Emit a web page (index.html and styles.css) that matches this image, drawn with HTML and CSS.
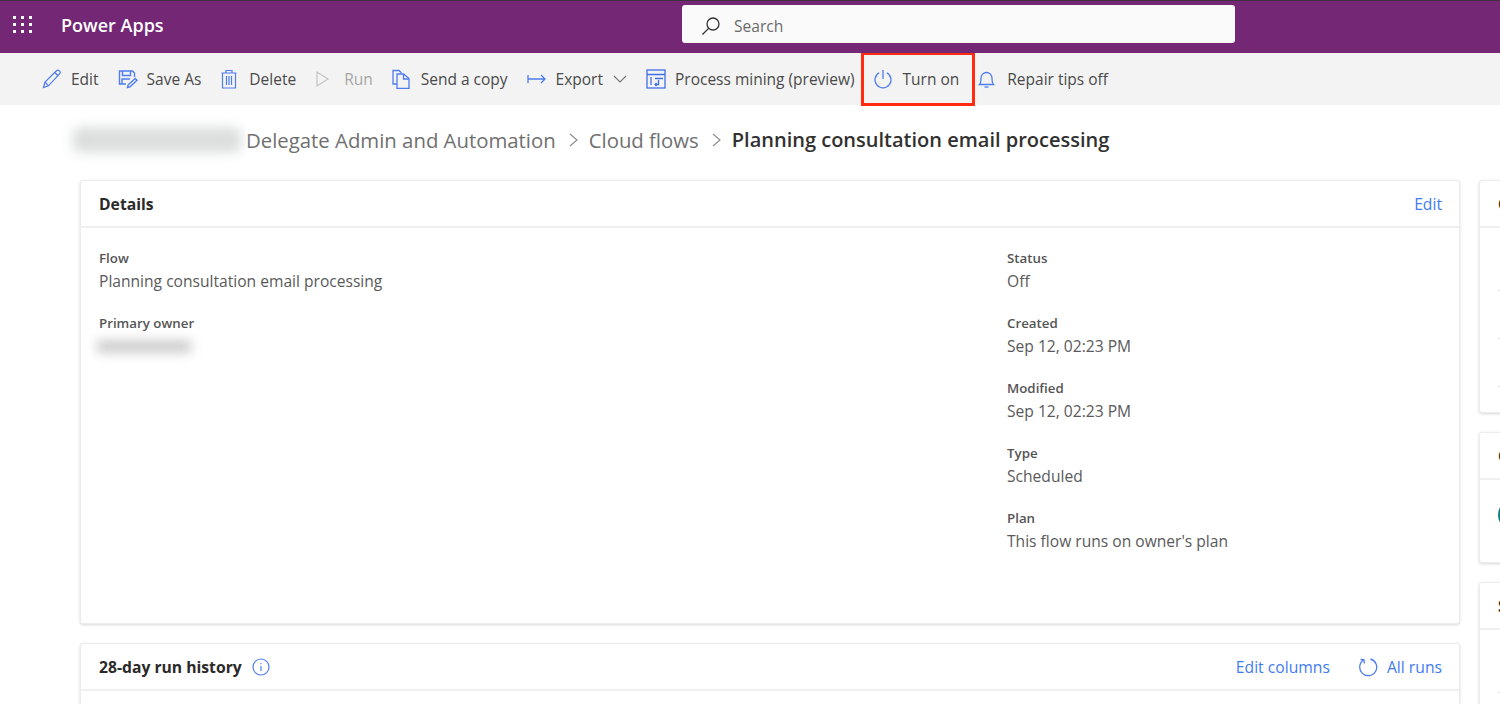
FILE: index.html
```html
<!DOCTYPE html>
<html lang="en">

<head>
    <meta charset="UTF-8">
    <meta name="viewport" content="width=device-width, initial-scale=1.0">
    <title>Power Apps</title>
    <link rel="stylesheet" href="styles.css">
</head>

<body>
    <header class="topbar">
        <div class="topbar-left">
            <svg class="waffle" width="20" height="20" viewBox="0 0 20 20">
                <g fill="#fff">
                    <rect x="0" y="1" width="3" height="3"/><rect x="8" y="1" width="3" height="3"/><rect x="16" y="1" width="3" height="3"/>
                    <rect x="0" y="8" width="3" height="3"/><rect x="8" y="8" width="3" height="3"/><rect x="16" y="8" width="3" height="3"/>
                    <rect x="0" y="15" width="3" height="3"/><rect x="8" y="15" width="3" height="3"/><rect x="16" y="15" width="3" height="3"/>
                </g>
            </svg>
            <span class="app-name">Power Apps</span>
        </div>
        <div class="search">
            <svg width="20" height="20" viewBox="0 0 20 20" fill="none" stroke="#333" stroke-width="1.3">
                <circle cx="12" cy="8" r="6"/>
                <path d="M7.6 12.4 1.5 18.5"/>
            </svg>
            <span>Search</span>
        </div>
    </header>

    <nav class="commands">
        <a class="cmd">
            <svg class="ico" viewBox="0 0 20 20" fill="none" stroke="#4f7cf0" stroke-width="1.2"><path d="M1.5 18.5 3 13 14.5 1.8a2 2 0 0 1 3 3L6.5 16.8z"/><path d="M12.8 3.5l3.4 3.3M3 13l3.5 3.8"/></svg>
            Edit
        </a>
        <a class="cmd">
            <svg class="ico" viewBox="0 0 20 20" fill="none" stroke="#4f7cf0" stroke-width="1.4"><path d="M8 15H1.500V2h13l2 2v4"/><path d="M4.500 2v4.500h8V2M4 15v-5h8"/><path d="M9.500 18.500l.7-2.700 7-6.300 1.800 1.800-7 6.500z"/></svg>
            Save As
        </a>
        <a class="cmd">
            <svg class="ico" viewBox="0 0 20 20" fill="none" stroke="#4f7cf0" stroke-width="1.2"><path d="M1.500 4h15M6 4V1.500h6V4M2.500 4v15h13V4M6.500 7v9M9 7v9M11.500 7v9"/></svg>
            Delete
        </a>
        <a class="cmd off">
            <svg class="ico" viewBox="0 0 20 20" fill="none" stroke="#c4c4c4" stroke-width="1.2"><path d="M2 3v14l11-7z"/></svg>
            Run
        </a>
        <a class="cmd">
            <svg class="ico" viewBox="0 0 20 20" fill="none" stroke="#4f7cf0" stroke-width="1.3"><path d="M5 15H1V1.500h6L9.500 4"/><path d="M5 5h6.500L17 9.500v10H5z"/><path d="M11.500 5v5H17"/></svg>
            Send a copy
        </a>
        <a class="cmd">
            <svg class="ico" viewBox="0 0 20 20" fill="none" stroke="#4f7cf0" stroke-width="1.3"><path d="M1 6v8M1 10h17M14 6l4 4-4 4"/></svg>
            Export
            <svg class="chevron" width="14" height="14" viewBox="0 0 14 14" fill="none" stroke="#777" stroke-width="1.1"><path d="M1 4l6 6 6-6"/></svg>
        </a>
        <a class="cmd">
            <svg class="ico" viewBox="0 0 20 20" fill="none" stroke="#3f6fe8" stroke-width="1.3"><rect x="1" y="1" width="18" height="18"/><path d="M1 5.500h18M9 9.500h8M5 8v8M12.500 11v4.500H9M10.500 14l-1.500 1.500 1.500 1.500"/></svg>
            Process mining (preview)
        </a>
        <a class="cmd turn-on">
            <svg class="ico" viewBox="0 0 20 20" fill="none" stroke="#4f7cf0" stroke-width="1.3"><path d="M5.200 3.800a8 8 0 1 0 7.600 0M9 1v9"/></svg>
            Turn on
        </a>
        <a class="cmd">
            <svg class="ico" viewBox="0 0 20 20" fill="none" stroke="#4f7cf0" stroke-width="1.3"><path d="M1.500 15.500C3 14 3 12.500 3 9a5.500 5.500 0 0 1 11 0c0 3.500 0 5 1.500 6.500z"/><path d="M6.500 18h4"/></svg>
            Repair tips off
        </a>
    </nav>

    <div class="crumbs">
        <span class="redacted crumb-blur"></span>
        <span>Delegate Admin and Automation</span>
        <svg class="sep" width="11" height="16" viewBox="0 0 11 16" fill="none" stroke="#8a8a8a" stroke-width="1.1"><path d="M2 2l7 6-7 6"/></svg>
        <span>Cloud flows</span>
        <svg class="sep" width="11" height="16" viewBox="0 0 11 16" fill="none" stroke="#8a8a8a" stroke-width="1.1"><path d="M2 2l7 6-7 6"/></svg>
        <strong>Planning consultation email processing</strong>
    </div>

    <main class="page">
        <div class="col-main">
            <section class="card details">
                <div class="card-head">
                    <h2>Details</h2>
                    <a class="link">Edit</a>
                </div>
                <div class="details-body">
                    <div class="field-col">
                        <div class="field">
                            <label>Flow</label>
                            <p>Planning consultation email processing</p>
                        </div>
                        <div class="field">
                            <label>Primary owner</label>
                            <p><span class="redacted owner-blur"></span></p>
                        </div>
                    </div>
                    <div class="field-col">
                        <div class="field">
                            <label>Status</label>
                            <p>Off</p>
                        </div>
                        <div class="field">
                            <label>Created</label>
                            <p>Sep 12, 02:23 PM</p>
                        </div>
                        <div class="field">
                            <label>Modified</label>
                            <p>Sep 12, 02:23 PM</p>
                        </div>
                        <div class="field">
                            <label>Type</label>
                            <p>Scheduled</p>
                        </div>
                        <div class="field">
                            <label>Plan</label>
                            <p>This flow runs on owner's plan</p>
                        </div>
                    </div>
                </div>
            </section>

            <section class="card history">
                <div class="card-head">
                    <h2>28-day run history</h2>
                    <svg class="info" width="18" height="18" viewBox="0 0 18 18" fill="none" stroke="#4f7cf0" stroke-width="1.2"><circle cx="9" cy="9" r="8"/><path d="M9 8v5M9 5v1.300"/></svg>
                    <div class="head-links">
                        <a class="link">Edit columns</a>
                        <a class="link all-runs">
                            <svg width="20" height="20" viewBox="0 0 20 20" fill="none" stroke="#4f7cf0" stroke-width="1.3"><path d="M6 2.800a8.500 8.500 0 1 0 6.500-.8"/><path d="M2.500 2.500 6 2.800l.3 3.700"/></svg>
                            All runs
                        </a>
                    </div>
                </div>
            </section>
        </div>

        <aside class="col-side">
            <section class="card side-a">
                <div class="card-head"><h2>Connections</h2></div>
                <div class="side-rows">
                    <div class="side-row"></div>
                    <div class="side-row"></div>
                    <div class="side-row"></div>
                </div>
            </section>
            <section class="card side-b">
                <div class="card-head"><h2>Owners</h2></div>
                <div class="side-body"><span class="avatar"></span></div>
            </section>
            <section class="card side-c">
                <div class="card-head"><h2>Solutions</h2></div>
                <div class="side-rows">
                    <div class="side-row"></div>
                </div>
            </section>
        </aside>
    </main>
</body>

</html>
```

FILE: styles.css
```css
* {
    padding: 0;
    margin: 0;
    box-sizing: border-box;
}

html,
body {
    height: 100%;
    overflow: hidden;
}

body {
    background-color: #fff;
    font-family: "Open Sans", "Noto Sans", sans-serif;
    color: #323130;
}

.topbar {
    height: 53px;
    background-color: #742774;
    border-top: 1px solid #3f3040;
    display: flex;
    align-items: center;
    position: relative;
}

.topbar-left {
    display: flex;
    align-items: center;
    padding: 0 0 4px 13px;
}

.waffle {
    margin-right: 28px;
}

.app-name {
    color: #fff;
    font-size: 18px;
    font-weight: 600;
}

.search {
    position: absolute;
    left: 682px;
    top: 4px;
    width: 553px;
    height: 38px;
    background-color: #fafafa;
    border-radius: 3px;
    display: flex;
    align-items: center;
    padding: 3px 0 0 19px;
    gap: 13px;
    color: #6b6b6b;
    font-size: 15.6px;
}

.commands {
    height: 52px;
    background-color: #f3f3f3;
    display: flex;
    align-items: center;
    padding: 0 0 1px 42px;
    gap: 19px;
    font-size: 15.5px;
    color: #4a4a4a;
}

.cmd {
    display: flex;
    align-items: center;
    gap: 9px;
    white-space: nowrap;
}

.cmd.off {
    color: #a6a6a6;
}

.ico {
    width: 20px;
    height: 20px;
    flex: none;
}

.chevron {
    margin-left: 1px;
}

/* red highlight on the screenshot */
.turn-on {
    align-self: flex-start;
    height: 54px;
    padding: 0 16px 0 13px;
    margin: -1px -16px 0 -13px;
    outline: 3px solid #ff2a10;
    outline-offset: -3px;
}

.crumbs {
    height: 75px;
    display: flex;
    align-items: center;
    padding: 0 0 6px 72px;
    font-size: 20.35px;
    color: #707070;
    white-space: nowrap;
}

.crumbs strong {
    font-size: 20px;
    font-weight: 600;
    color: #323130;
}

.sep {
    margin: 0 10px 0 12px;
}

.redacted {
    display: inline-block;
    background-color: #dcdede;
    filter: blur(6px);
}

.crumb-blur {
    width: 170px;
    height: 26px;
    margin-right: 4px;
    border-radius: 10px;
}

.owner-blur {
    width: 94px;
    height: 11px;
    margin-left: -2px;
    background-color: #c4c4c4;
}

.page {
    display: flex;
    gap: 19px;
    padding-left: 80px;
}

.col-main {
    width: 1380px;
    flex: none;
    display: flex;
    flex-direction: column;
    gap: 19px;
}

.col-side {
    width: 300px;
    flex: none;
    display: flex;
    flex-direction: column;
    gap: 19px;
}

.card {
    background-color: #fff;
    border: 1px solid #ececec;
    border-radius: 3px;
    box-shadow: 0 1px 3px rgba(0, 0, 0, 0.16);
}

.card-head {
    height: 47px;
    padding: 0 17px 0 18px;
    display: flex;
    align-items: center;
    border-bottom: 2px solid #f0f0f0;
}

.card-head h2 {
    font-size: 15.7px;
    font-weight: 700;
    color: #2b2a29;
}

.card-head .link:only-of-type {
    margin-left: auto;
}

.link {
    color: #3f7cf2;
    font-size: 15.7px;
}

.details {
    height: 444px;
}

.details-body {
    display: flex;
    padding: 20px 18px 0;
}

.field-col {
    display: flex;
    flex-direction: column;
    gap: 20px;
}

.field-col:first-child {
    width: 908px;
}

.field {
    height: 45px;
}

.field label {
    display: block;
    font-size: 13.3px;
    font-weight: 600;
    line-height: 20px;
    color: #555;
}

.field p {
    font-size: 15.6px;
    line-height: 26px;
    color: #5a5a5a;
}

.history {
    height: 200px;
}

.info {
    margin-left: 10px;
}

.head-links {
    margin-left: auto;
    display: flex;
    align-items: center;
    gap: 28px;
}

.all-runs {
    display: flex;
    align-items: center;
    gap: 9px;
}

.side-a {
    height: 233px;
}

.side-b {
    height: 131px;
}

.side-c {
    height: 200px;
}

.side-body {
    padding: 19px 18px;
}

.avatar {
    display: block;
    width: 32px;
    height: 32px;
    border-radius: 50%;
    background-color: #0f7b83;
}

.side-rows {
    padding: 15px 0 0 18px;
}

.side-row {
    height: 48px;
    border-bottom: 1px solid #dedede;
}
```
